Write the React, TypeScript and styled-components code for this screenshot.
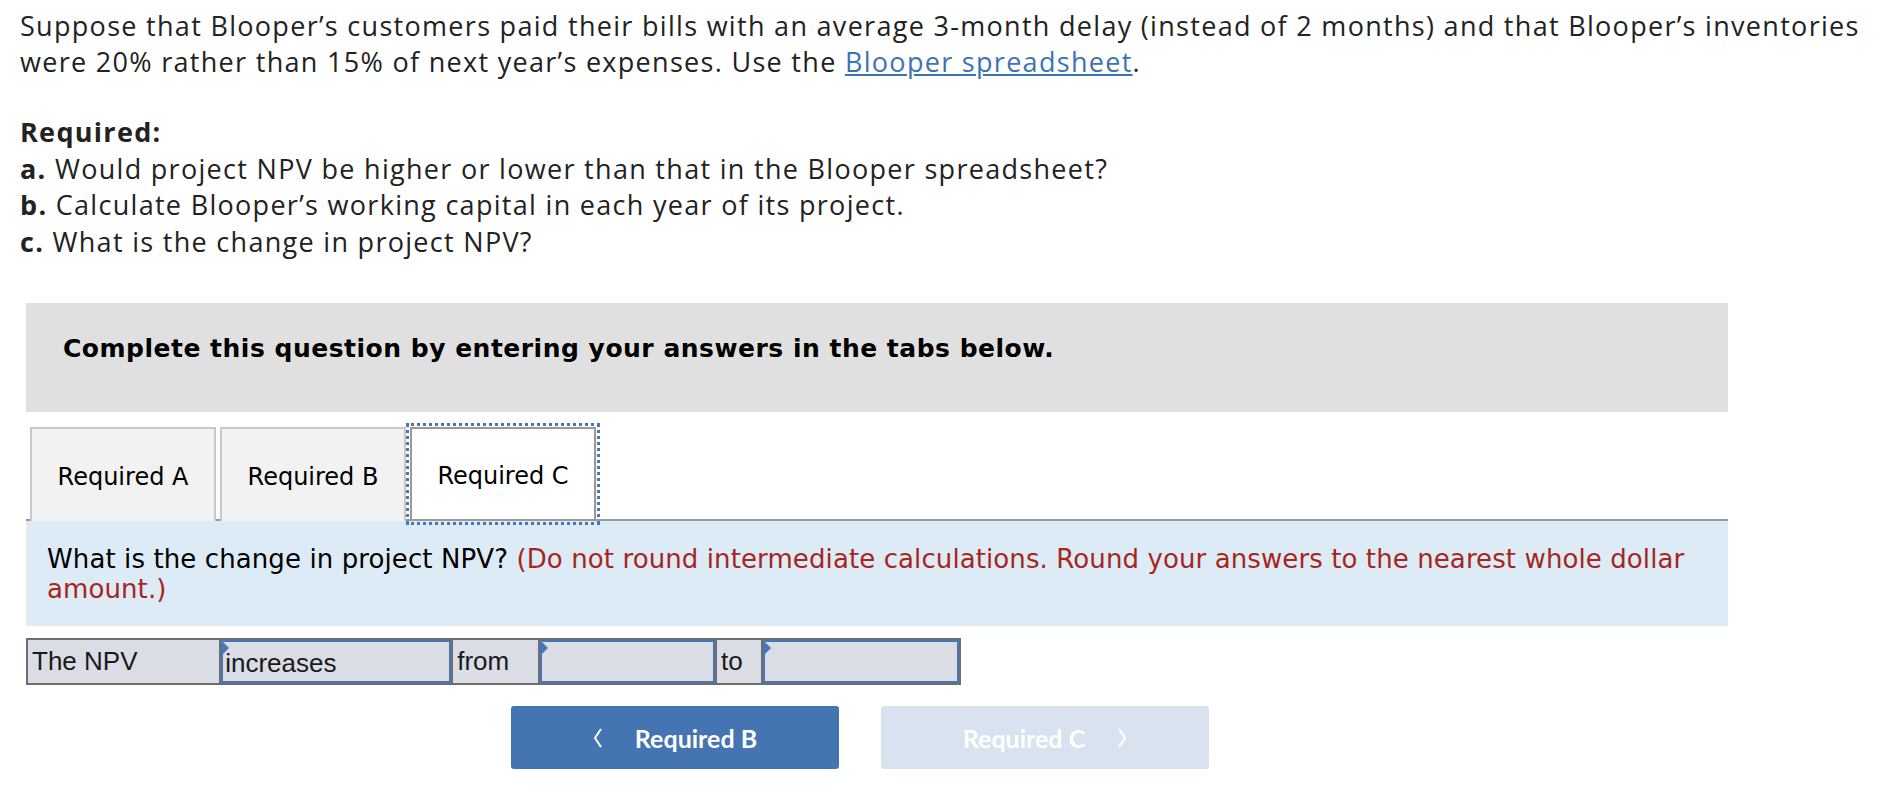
import React from 'react';
import styled, { createGlobalStyle } from 'styled-components';

const GlobalStyle = createGlobalStyle`
  html, body {
    margin: 0;
    padding: 0;
    background: #fff;
  }
  body {
    font-family: "Open Sans", Lato, sans-serif;
    color: #222;
  }
`;

const Page = styled.div`
  padding: 8px 10px 0 20px;
`;

const Intro = styled.p`
  margin: 0;
  font-family: "Open Sans", Lato, sans-serif;
  font-size: 27px;
  letter-spacing: 1.3px;
  line-height: 36px;
  color: #222;
`;

const Link = styled.a`
  color: #3b73b9;
  text-decoration: underline;
  cursor: pointer;
`;

const Requirements = styled.div`
  margin-top: 34px;
  font-family: "Open Sans", Lato, sans-serif;
  font-size: 27px;
  letter-spacing: 1.3px;
  line-height: 36.5px;
  color: #222;
`;

const Line = styled.div``;

const Question = styled.section`
  margin: 43px 0 0 6px;
  width: 1702px;
`;

const Banner = styled.div`
  height: 109px;
  box-sizing: border-box;
  padding: 31px 37px 0;
  background: #e0e0e0;
  font-family: "DejaVu Sans", Verdana, sans-serif;
  font-weight: bold;
  font-size: 25px;
  letter-spacing: 0.5px;
  line-height: 30px;
  color: #000;
`;

const TabBar = styled.div`
  display: flex;
  gap: 4px;
  margin-top: 15px;
  padding-left: 4px;
  border-bottom: 2px solid #999;
`;

const Tab = styled.button<{ $active?: boolean }>`
  width: 186px;
  height: 94px;
  box-sizing: border-box;
  margin: 0 0 -2px;
  padding: 4px 0 0;
  font-family: "DejaVu Sans", Verdana, sans-serif;
  font-size: 24px;
  color: #000;
  background: ${(p) => (p.$active ? '#fff' : '#f2f2f2')};
  border: 2px solid ${(p) => (p.$active ? '#999' : '#c8c8c8')};
  border-bottom: ${(p) => (p.$active ? '2px solid #999' : 'none')};
  outline: ${(p) => (p.$active ? '3px dotted #4a76b8' : 'none')};
  outline-offset: 1px;
  cursor: pointer;
`;

const Prompt = styled.div`
  background: #ddebf7;
  padding: 23px 21px 22px;
  font-family: "DejaVu Sans", Verdana, sans-serif;
  font-size: 26px;
  letter-spacing: 0.1px;
  line-height: 30px;
  color: #000;
`;

const Hint = styled.span`
  color: #a8251c;
`;

const AnswerRow = styled.div`
  display: flex;
  width: 935px;
  height: 47px;
  box-sizing: border-box;
  margin-top: 12px;
  border: 2px solid #6e6e6e;
  background: #6e6e6e;
  gap: 2px;
`;

const Cell = styled.div<{ $w: number }>`
  width: ${(p) => p.$w}px;
  box-sizing: border-box;
  display: flex;
  align-items: center;
  padding-left: 4px;
  background: #dadde6;
  font-family: "Liberation Sans", Arial, sans-serif;
  font-size: 26px;
  color: #1a1a1a;
`;

const Input = styled.div<{ $w: number }>`
  position: relative;
  width: ${(p) => p.$w}px;
  box-sizing: border-box;
  display: flex;
  align-items: center;
  padding: 3px 0 0 2px;
  background: #dadde6;
  border: 2px solid #4a77b4;
  font-family: "Liberation Sans", Arial, sans-serif;
  font-size: 26px;
  color: #1a1a1a;

  &::before {
    content: '';
    position: absolute;
    top: 0;
    left: 0;
    border-top: 6px solid transparent;
    border-bottom: 6px solid transparent;
    border-left: 6px solid #4a77b4;
  }
`;

const Nav = styled.div`
  display: flex;
  justify-content: center;
  gap: 42px;
  margin-top: 21px;
  padding-right: 34px;
`;

const NavButton = styled.button<{ $disabled?: boolean }>`
  width: 328px;
  height: 63px;
  display: flex;
  align-items: center;
  justify-content: center;
  gap: 32px;
  border: none;
  border-radius: 3px;
  background: ${(p) => (p.$disabled ? '#d9e3ef' : '#4574b3')};
  color: #fff;
  font-family: Lato, sans-serif;
  font-weight: bold;
  font-size: 25px;
  cursor: ${(p) => (p.$disabled ? 'default' : 'pointer')};
`;

const Chevron = ({ dir }: { dir: 'left' | 'right' }) => (
  <svg width="10" height="20" viewBox="0 0 10 20">
    <polyline
      points={dir === 'left' ? '8,1 2,10 8,19' : '2,1 8,10 2,19'}
      fill="none"
      stroke="#fff"
      strokeWidth="2"
    />
  </svg>
);

export default function App() {
  return (
    <Page>
      <GlobalStyle />
      <Intro>
        Suppose that Blooper’s customers paid their bills with an average 3-month delay (instead of 2
        months) and that Blooper’s inventories were 20% rather than 15% of next year’s expenses. Use the{' '}
        <Link>Blooper spreadsheet</Link>.
      </Intro>
      <Requirements>
        <Line><b>Required:</b></Line>
        <Line><b>a.</b> Would project NPV be higher or lower than that in the Blooper spreadsheet?</Line>
        <Line><b>b.</b> Calculate Blooper’s working capital in each year of its project.</Line>
        <Line><b>c.</b> What is the change in project NPV?</Line>
      </Requirements>
      <Question>
        <Banner>Complete this question by entering your answers in the tabs below.</Banner>
        <TabBar>
          <Tab>Required A</Tab>
          <Tab>Required B</Tab>
          <Tab $active>Required C</Tab>
        </TabBar>
        <Prompt>
          What is the change in project NPV?{' '}
          <Hint>(Do not round intermediate calculations. Round your answers to the nearest whole dollar amount.)</Hint>
        </Prompt>
        <AnswerRow>
          <Cell $w={192}>The NPV</Cell>
          <Input $w={231}>increases</Input>
          <Cell $w={85}>from</Cell>
          <Input $w={176} />
          <Cell $w={44}>to</Cell>
          <Input $w={197} />
        </AnswerRow>
        <Nav>
          <NavButton>
            <Chevron dir="left" />
            Required B
          </NavButton>
          <NavButton $disabled>
            Required C
            <Chevron dir="right" />
          </NavButton>
        </Nav>
      </Question>
    </Page>
  );
}
